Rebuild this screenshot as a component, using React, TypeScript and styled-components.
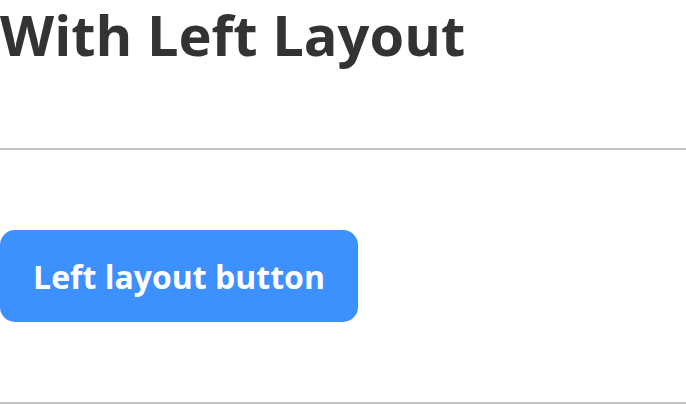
import React from "react";
import styled, { createGlobalStyle } from "styled-components";

const Global = createGlobalStyle`
  html, body { margin: 0; padding: 0; background: #ffffff; }
  body { font-family: "Open Sans", "Noto Sans", sans-serif; overflow: hidden; }
`;

const Page = styled.div`
  display: flex;
  flex-direction: column;
  width: 686px;
`;

const Title = styled.h1`
  margin: 0;
  height: 148px;
  font-size: 56px;
  line-height: 69px;
  font-weight: 700;
  color: #333333;
  letter-spacing: 0;
`;

const Rule = styled.hr`
  margin: 0;
  border: none;
  height: 2px;
  background: #c4c4c4;
`;

const Section = styled.div`
  display: flex;
  justify-content: flex-start;
  padding: 80px 0;
`;

const Button = styled.button`
  font-family: "Open Sans", "Noto Sans", sans-serif;
  font-size: 32px;
  font-weight: 700;
  color: #ffffff;
  background: #3d91ff;
  border: none;
  border-radius: 15px;
  height: 92px;
  width: 358px;
  padding: 0;
  cursor: pointer;
`;

export default function App() {
  return (
    <Page>
      <Global />
      <Title>With Left Layout</Title>
      <Rule />
      <Section>
        <Button>Left layout button</Button>
      </Section>
      <Rule />
    </Page>
  );
}
